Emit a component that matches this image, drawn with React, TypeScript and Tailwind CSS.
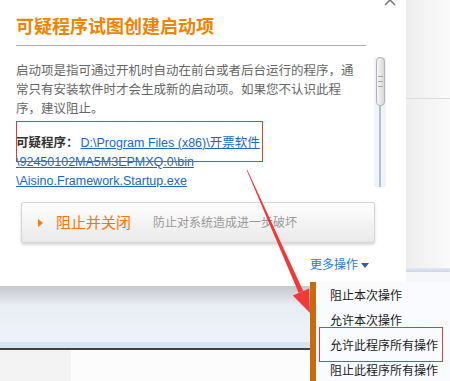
import React from 'react';

const menuItems = ['阻止本次操作', '允许本次操作', '允许此程序所有操作', '阻止此程序所有操作'];

export default function App() {
  return (
    <div className="relative h-[381px] w-[450px] overflow-hidden bg-white font-['Liberation_Sans','Noto_Sans_CJK_SC',sans-serif]">
      <div className="flex h-[286px]">
        {/* dialog */}
        <div className="relative w-[406px] bg-white pl-4">
          <svg className="absolute right-[10px] top-[-6px]" width="12" height="12" viewBox="0 0 12 12">
            <path d="M1 1 L11 11 M11 1 L1 11" stroke="#7a7a7a" strokeWidth="1.6" />
          </svg>
          <div className="pt-[14px] text-[18px] font-bold leading-[22px] text-[#f08300] font-['Noto_Sans_CJK_SC',sans-serif]">可疑程序试图创建启动项</div>
          <div className="mt-[9px] h-px w-[350px] bg-[#acacac]" />

          <div className="flex h-[141px]">
            <div className="w-[350px] overflow-hidden pt-[16px] text-[12.5px] leading-[19px]">
              <div className="whitespace-nowrap text-[#666]">
                <div>启动项是指可通过开机时自动在前台或者后台运行的程序，通</div>
                <div>常只有安装软件时才会生成新的启动项。如果您不认识此程</div>
                <div>序，建议阻止。</div>
              </div>
              <div className="mt-[15px] whitespace-nowrap">
                <div>
                  <span className="font-bold text-[#333]">可疑程序：</span>
                  <span className="ml-[2px] text-[#1b66c8] underline">D:\Program Files (x86)\开票软件</span>
                </div>
                <div className="text-[#1b66c8] underline">\92450102MA5M3EPMXQ.0\bin</div>
                <div className="text-[#1b66c8] underline">\Aisino.Framework.Startup.exe</div>
              </div>
            </div>
            <div className="ml-[8px] mt-[11px] flex h-[130px] w-[12px] flex-col items-center bg-[#eef3fd]">
              <div className="flex h-[49px] w-[9px] flex-col items-center justify-center gap-[4px] rounded-[4px] border border-[#b3b3b3] bg-gradient-to-r from-[#f6f6f6] to-[#d8d8d8]">
                <div className="h-px w-[5px] bg-[#a8a8a8]" />
                <div className="h-px w-[5px] bg-[#a8a8a8]" />
                <div className="h-px w-[5px] bg-[#a8a8a8]" />
              </div>
              <div className="w-[2px] flex-1 bg-[#bdbdbd]" />
            </div>
          </div>

          <div className="ml-[5px] mt-[15px] flex h-[41px] w-[354px] items-center rounded-[2px] border border-[#d6d6d6] bg-gradient-to-b from-white to-[#e9e9e9] shadow-[0_2px_3px_rgba(0,0,0,0.15)]">
            <div className="ml-[16px] h-0 w-0 border-y-[4px] border-l-[5px] border-y-transparent border-l-[#ff7700]" />
            <span className="ml-[13px] text-[15px] text-[#ff7300] font-['Noto_Sans_CJK_SC',sans-serif]">阻止并关闭</span>
            <span className="ml-[22px] text-[12px] text-[#999]">防止对系统造成进一步破坏</span>
          </div>

          <div className="ml-[294px] mt-[15px] flex items-center text-[12px] leading-[14px] text-[#2a78d4]">
            <span>更多操作</span>
            <div className="ml-[3px] h-0 w-0 border-x-[4px] border-t-[5px] border-x-transparent border-t-[#2c5fad]" />
          </div>
        </div>

        {/* window behind, right strip */}
        <div className="flex flex-1 flex-col bg-gradient-to-r from-[#eeeeee] to-[#fafafa]">
          <div className="h-[98px]" />
          <div className="h-px bg-[#dcdcdc]" />
          <div className="h-[169px]" />
          <div className="h-[4px] bg-gradient-to-b from-[#e2e8f1] to-[#ccd7e6]" />
          <div className="flex-1 bg-[#f6f7f9]" />
        </div>
      </div>

      {/* window behind, lower part */}
      <div className="h-[56px] bg-gradient-to-b from-[#c5c8cc] via-[#eaedf3] via-35% to-[#eef3fb]" />
      <div className="h-[6px] bg-[#d9e4f1]" />
      <div className="h-[2px] bg-[#404040]" />
      <div className="flex h-[31px]">
        <div className="w-[71px] bg-[#f3f3f3]" />
        <div className="flex-1 bg-[#fcfcfc]" />
      </div>

      {/* annotations */}
      <div className="pointer-events-none absolute left-[16px] top-[121px] h-[41px] w-[247px] border border-[#e53935]" />
      <svg className="pointer-events-none absolute left-0 top-0" width="450" height="381" viewBox="0 0 450 381">
        <polygon points="246.6,170 247.4,170 303.3,291 298.7,293" fill="#f03a3a" />
        <polygon points="309.2,288.4 292.8,295.6 310,313" fill="#f03a3a" />
      </svg>

      {/* dropdown menu */}
      <div className="absolute left-[310px] top-[282px] flex h-[99px] w-[140px]">
        <div className="w-[6px] bg-[#c96a0c]" />
        <div className="flex-1 bg-[#fafbfe] pl-[14px] text-[12px] leading-[25px] text-[#1a1a1a] font-['Noto_Sans_CJK_SC',sans-serif]">
          {menuItems.map((item) => (
            <div key={item} className="h-[25px] whitespace-nowrap">{item}</div>
          ))}
        </div>
      </div>
      <div className="pointer-events-none absolute left-[319px] top-[327px] h-[35px] w-[124px] border border-[#e53935]" />
    </div>
  );
}
